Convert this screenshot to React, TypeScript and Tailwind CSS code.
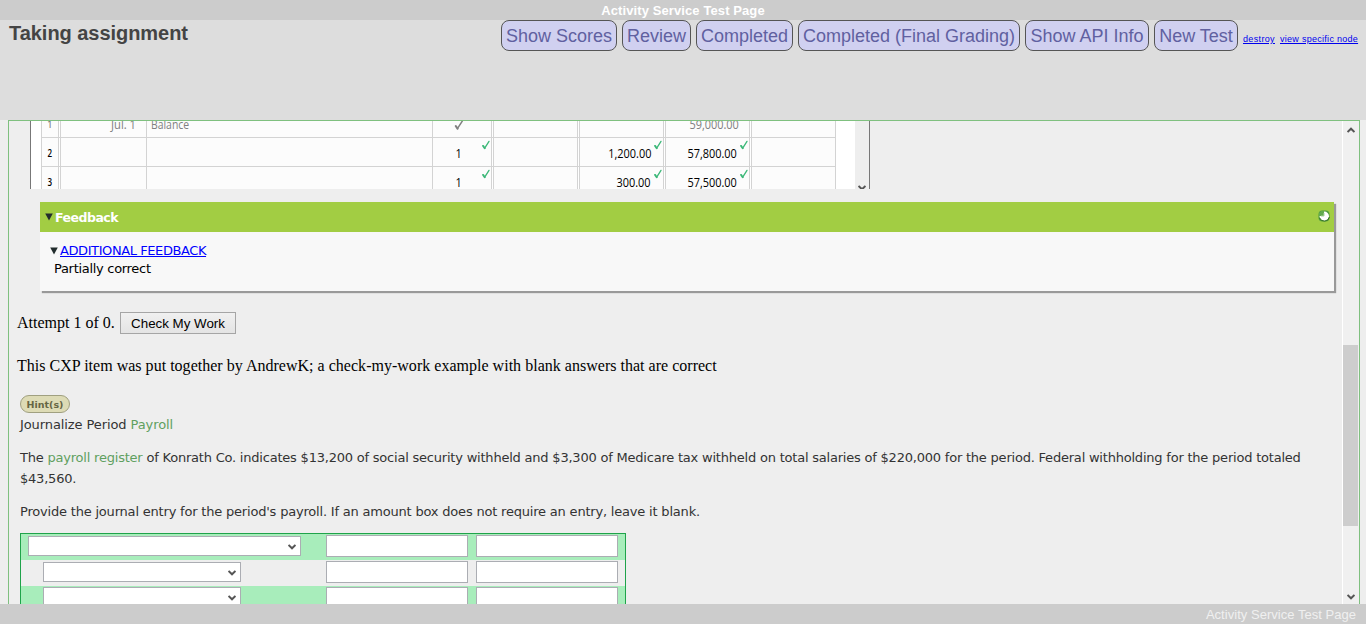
import React from "react";

const Tick = ({ className }: { className: string }) => (
  <svg viewBox="0 0 8 9" className={className} fill="none" stroke="currentColor" strokeLinecap="round">
    <path d="M1.1 5.4 L2.7 7.7" strokeWidth="1.9" />
    <path d="M2.7 7.6 L7 0.9" strokeWidth="1.3" />
  </svg>
);

const Chevron = ({ up = false }: { up?: boolean }) => (
  <svg width="8" height="6" viewBox="0 0 8 6" className={up ? "block shrink-0 rotate-180" : "block shrink-0"}>
    <path d="M0.5 0.9 L4 4.3 L7.5 0.9" fill="none" stroke="#555" strokeWidth="2" />
  </svg>
);

const Down = () => (
  <svg width="8" height="8" viewBox="0 0 8 8" className="block shrink-0">
    <path d="M0.2 0.5 H7.8 L4 7.6 Z" fill="#222d2d" />
  </svg>
);

const actions = [
  { label: "Show Scores", w: "w-[116px]" },
  { label: "Review", w: "w-[69px]" },
  { label: "Completed", w: "w-[97px]" },
  { label: "Completed (Final Grading)", w: "w-[222px]" },
  { label: "Show API Info", w: "w-[124px]" },
  { label: "New Test", w: "w-[84px]" },
];

type Entry = { n: string; date?: string; item?: string; ref: string; credit?: string; balance: string; given?: boolean };

const entries: Entry[] = [
  { n: "1", date: "Jul. 1", item: "Balance", ref: "", balance: "59,000.00", given: true },
  { n: "2", ref: "1", credit: "1,200.00", balance: "57,800.00" },
  { n: "3", ref: "1", credit: "300.00", balance: "57,500.00" },
];

const Cell = ({
  w,
  align = "justify-end pr-3",
  ok,
  children,
}: {
  w: string;
  align?: string;
  ok?: boolean;
  children?: React.ReactNode;
}) => (
  <div className={`relative flex shrink-0 items-center border-r border-[#d3d3d3] bg-[#fcfcfc] pt-[2px] ${w} ${align}`}>
    {children}
    {ok && <Tick className="absolute top-[2px] right-px h-[10px] w-2 text-[#3cb878]" />}
  </div>
);

const Gap = () => <div className="w-[2px] shrink-0 border-r border-[#d3d3d3] bg-white" />;

const LedgerRow = ({ e }: { e: Entry }) => (
  <div
    className={`flex h-[29px] shrink-0 border-b border-[#d3d3d3] font-['Open_Sans','Noto_Sans',sans-serif] text-[13px] leading-4 ${
      e.given ? "text-[#808080]" : "text-black"
    }`}
  >
    <Cell w="w-[17px]" align="justify-center">
      <span className="inline-block scale-x-80 text-[10px] font-semibold">{e.n}</span>
    </Cell>
    <Gap />
    <Cell w="w-[86px]" align="justify-end pr-[10px]">
      <span className="inline-block origin-right scale-x-86">{e.date}</span>
    </Cell>
    <Cell w="w-[286px]" align="justify-start pl-1">
      <span className="inline-block origin-left scale-x-80">{e.item}</span>
    </Cell>
    <Cell w="w-[59px]" align="justify-start pl-[22px]" ok={!e.given}>
      {e.given ? (
        <Tick className="mt-px ml-[-2px] h-[10px] w-[12px]" />
      ) : (
        <span className="inline-block scale-x-84">{e.ref}</span>
      )}
    </Cell>
    <Gap />
    <Cell w="w-[84px]" />
    <Gap />
    <Cell w="w-[84px]" ok={!e.given}>
      <span className="inline-block origin-right scale-x-84">{e.credit}</span>
    </Cell>
    <Gap />
    <Cell w="w-[84px]" ok={!e.given} align={e.given ? "justify-end pr-[10px]" : "justify-end pr-3"}>
      <span className="inline-block origin-right scale-x-84">{e.balance}</span>
    </Cell>
    <Gap />
    <Cell w="w-[84px]" />
  </div>
);

const Ledger = () => (
  <div className="ml-[21px] flex h-[68px] w-[840px] overflow-hidden border-x border-[#777] bg-white">
    <div className="-mt-3 ml-[10px] flex flex-col border-l border-[#d3d3d3]">
      {entries.map((e) => (
        <LedgerRow key={e.n} e={e} />
      ))}
    </div>
    <div className="ml-auto flex w-[14px] justify-center bg-[#eee] pt-[64px]">
      <Chevron />
    </div>
  </div>
);

const Select = ({ className }: { className: string }) => (
  <div className={`flex h-5 items-center justify-end border border-[#abadb3] bg-white pt-[2px] pr-1 ${className}`}>
    <Chevron />
  </div>
);

const JournalRow = ({ band, select, pad }: { band: string; select: string; pad: string }) => (
  <div className={`flex h-[26px] items-start ${band}`}>
    <div className={`w-[305px] shrink-0 ${pad}`}>
      <Select className={select} />
    </div>
    <div className="mt-px h-[22px] w-[142px] border border-[#abadb3] bg-white" />
    <div className="mt-px ml-2 h-[22px] w-[142px] border border-[#abadb3] bg-white" />
  </div>
);

const Progress = () => (
  <svg width="12" height="12" viewBox="0 0 12 12" className="block">
    <rect x="0.5" y="0.5" width="11" height="11" rx="4" fill="#4f9a3e" />
    <circle cx="6.3" cy="6.3" r="4.7" fill="#fff" />
    <path d="M6 6 H1 V3 L3 1 H6 Z" fill="#62aa4e" />
    <path d="M3 6 H6 V3" fill="none" stroke="#a9d49c" strokeWidth="1" />
    <path d="M1.6 8 A5.2 5.2 0 0 0 11.4 7" fill="none" stroke="#2c6a1c" strokeWidth="0.9" />
  </svg>
);

export default function App() {
  return (
    <div className="flex h-[624px] w-[1366px] flex-col overflow-hidden bg-[#eee] font-['Liberation_Sans',Arial,sans-serif]">
      <div className="h-5 shrink-0 bg-[#ccc] text-center text-[13px] leading-[21px] font-bold tracking-[0.1px] text-white">
        Activity Service Test Page
      </div>
      <header className="flex h-[100px] shrink-0 items-start bg-[#ddd] pr-2 pl-[9px]">
        <h1 className="pt-[1px] text-[20px] leading-6 font-bold tracking-[-0.04px] whitespace-nowrap text-[#444]">
          Taking assignment
        </h1>
        <nav className="ml-auto flex items-start gap-[5px] whitespace-nowrap">
          {actions.map((a) => (
            <button
              key={a.label}
              className={`flex h-[31px] items-center justify-center rounded-[8px] border border-[#555] bg-[#d0d0f0] text-[18px] leading-none text-[#6060a0] ${a.w}`}
            >
              {a.label}
            </button>
          ))}
          <a className="w-8 pt-[13px] text-[9px] leading-3 tracking-[0.35px] text-[#0000ee] underline">destroy</a>
          <a className="w-[78px] pt-[13px] text-[9px] leading-3 tracking-[0.28px] text-[#0000ee] underline">view specific node</a>
        </nav>
      </header>

      <main className="mx-2 flex h-[484px] w-[1352px] shrink-0 overflow-hidden border-x border-t border-[#7fc07f]">
        <div className="h-[483px] w-[1333px] shrink-0 overflow-hidden">
          <Ledger />

          <section className="mt-[13px] ml-[31px] w-[1294px] bg-[#f8f8f8] font-['DejaVu_Sans',Verdana,sans-serif] text-[13px] shadow-[2px_2px_1px_#999]">
            <div className="flex h-[30px] items-center bg-[#a2cd43] pr-1 pl-[5px]">
              <Down />
              <span className="mt-[2px] ml-[2px] text-[12.5px] font-bold tracking-[-0.5px] text-white">Feedback</span>
              <span className="mb-[3px] ml-auto">
                <Progress />
              </span>
            </div>
            <div className="flex h-[59px] flex-col pt-[10px] pl-[10px] leading-[18px]">
              <div className="flex items-center">
                <Down />
                <a className="ml-[2px] tracking-[-0.41px] text-[#0000ff] underline">ADDITIONAL FEEDBACK</a>
              </div>
              <p className="pl-1 tracking-[-0.3px]">Partially correct</p>
            </div>
          </section>

          <div className="mt-[21px] ml-2 flex h-[22px] items-center font-['Liberation_Serif','Times_New_Roman',serif] text-[16px] text-black">
            <span className="w-[103px] whitespace-nowrap">Attempt 1 of 0.</span>
            <button className="flex h-[22px] w-[116px] items-center justify-center border border-[#a5a5a5] bg-linear-to-b from-[#f0f0f0] to-[#e4e4e4] pt-px font-['Liberation_Sans',Arial,sans-serif] text-[13.33px] whitespace-nowrap">
              Check My Work
            </button>
          </div>
          <p className="mt-[22px] ml-2 h-5 font-['Liberation_Serif','Times_New_Roman',serif] text-[16px] leading-5 tracking-[0.018px] whitespace-nowrap text-black">
            This CXP item was put together by AndrewK; a check-my-work example with blank answers that are correct
          </p>

          <div className="mt-[19px] ml-[11px] font-['DejaVu_Sans',Verdana,sans-serif] text-[13px] leading-[21px] text-[#333]">
            <span className="flex h-[18px] w-[50px] items-center justify-center rounded-full border border-[#a0a080] bg-[#dddbb5] text-[9.5px] font-bold text-[#666644]">
              Hint(s)
            </span>
            <p className="mt-px tracking-[-0.09px]">
              Journalize Period <span className="text-[#5fa05f]">Payroll</span>
            </p>
            <p className="mt-3 tracking-[-0.211px] whitespace-nowrap">
              The <span className="text-[#5fa05f]">payroll register</span> of Konrath Co. indicates $13,200 of social security
              withheld and $3,300 of Medicare tax withheld on total salaries of $220,000 for the period. Federal withholding for
              the period totaled
              <br />
              $43,560.
            </p>
            <p className="mt-3 tracking-[-0.195px] whitespace-nowrap">
              Provide the journal entry for the period's payroll. If an amount box does not require an entry, leave it blank.
            </p>
            <div className="mt-[11px] w-[606px] border border-[#1fa34a]">
              <JournalRow band="bg-[#a8edbb]" select="w-[273px]" pad="pt-[2px] pl-[7px]" />
              <JournalRow band="bg-[#eee]" select="w-[198px]" pad="pt-[2px] pl-[22px]" />
              <JournalRow band="bg-[#a8edbb]" select="w-[198px]" pad="pt-px pl-[22px]" />
            </div>
          </div>
        </div>
        <div className="flex w-[17px] shrink-0 flex-col items-center border-l border-white bg-[#f0f0f0] pt-[6px] pb-1">
          <Chevron up />
          <div className="mt-[212px] mr-px h-[181px] w-[15px] bg-[#cdcdcd]" />
          <div className="mt-auto">
            <Chevron />
          </div>
        </div>
      </main>

      <footer className="h-5 shrink-0 bg-[#ccc] pr-[10px] text-right text-[13px] leading-[21px] tracking-[0.03px] text-[#f0f0f0]">
        Activity Service Test Page
      </footer>
    </div>
  );
}
